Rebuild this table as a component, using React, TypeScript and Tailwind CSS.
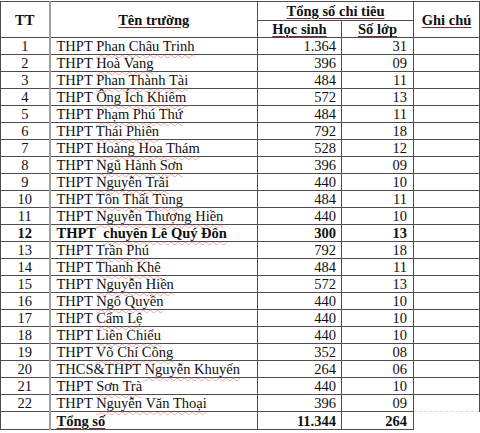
import React from "react";

type Row = { tt: string; prefix: string; name: string; hs: string; sl: string; bold?: boolean };

const rows: Row[] = [
  { tt: "1", prefix: "THPT ", name: "Phan Châu Trinh", hs: "1.364", sl: "31" },
  { tt: "2", prefix: "THPT ", name: "Hoà Vang", hs: "396", sl: "09" },
  { tt: "3", prefix: "THPT ", name: "Phan Thành Tài", hs: "484", sl: "11" },
  { tt: "4", prefix: "THPT ", name: "Ông Ích Khiêm", hs: "572", sl: "13" },
  { tt: "5", prefix: "THPT ", name: "Phạm Phú Thứ", hs: "484", sl: "11" },
  { tt: "6", prefix: "THPT ", name: "Thái Phiên", hs: "792", sl: "18" },
  { tt: "7", prefix: "THPT ", name: "Hoàng Hoa Thám", hs: "528", sl: "12" },
  { tt: "8", prefix: "THPT ", name: "Ngũ Hành Sơn", hs: "396", sl: "09" },
  { tt: "9", prefix: "THPT ", name: "Nguyễn Trãi", hs: "440", sl: "10" },
  { tt: "10", prefix: "THPT ", name: "Tôn Thất Tùng", hs: "484", sl: "11" },
  { tt: "11", prefix: "THPT ", name: "Nguyễn Thượng Hiền", hs: "440", sl: "10" },
  { tt: "12", prefix: "THPT\u00a0 ", name: "chuyên Lê Quý Đôn", hs: "300", sl: "13", bold: true },
  { tt: "13", prefix: "THPT ", name: "Trần Phú", hs: "792", sl: "18" },
  { tt: "14", prefix: "THPT ", name: "Thanh Khê", hs: "484", sl: "11" },
  { tt: "15", prefix: "THPT ", name: "Nguyễn Hiền", hs: "572", sl: "13" },
  { tt: "16", prefix: "THPT ", name: "Ngô Quyền", hs: "440", sl: "10" },
  { tt: "17", prefix: "THPT ", name: "Cẩm Lệ", hs: "440", sl: "10" },
  { tt: "18", prefix: "THPT ", name: "Liên Chiểu", hs: "440", sl: "10" },
  { tt: "19", prefix: "THPT ", name: "Võ Chí Công", hs: "352", sl: "08" },
  { tt: "20", prefix: "THCS&THPT ", name: "Nguyễn Khuyến", hs: "264", sl: "06" },
  { tt: "21", prefix: "THPT ", name: "Sơn Trà", hs: "440", sl: "10" },
  { tt: "22", prefix: "THPT ", name: "Nguyễn Văn Thoại", hs: "396", sl: "09" },
];

const cell = "border border-[#4d4d4d] p-0";
const wavy = "underline decoration-wavy decoration-[#f2a0a0] decoration-1 underline-offset-[3px]";
const hdr = "underline decoration-[#7a3030] decoration-1 underline-offset-[2px]";

export default function App() {
  return (
    <div className="w-[480px] h-[433px] bg-white pt-px overflow-hidden">
      <table
        className="table-fixed border-collapse w-[479px] text-[14.5px] leading-[16px] text-[#111]"
        style={{ fontFamily: '"Liberation Serif", "Times New Roman", serif' }}
      >
        <colgroup>
          <col className="w-[49px]" />
          <col className="w-[208px]" />
          <col className="w-[84px]" />
          <col className="w-[72px]" />
          <col className="w-[66px]" />
        </colgroup>
        <thead>
          <tr className="h-[19px]">
            <th rowSpan={2} className={`${cell} border-r-2 border-r-[#a0a0a0] text-center font-bold`}>
              TT
            </th>
            <th rowSpan={2} className={`${cell} text-center font-bold`}>
              <span className={hdr}>Tên trường</span>
            </th>
            <th colSpan={2} className={`${cell} text-center font-bold`}>
              <span className={hdr}>Tổng số chỉ tiêu</span>
            </th>
            <th rowSpan={2} className={`${cell} text-center font-bold`}>
              <span className={hdr}>Ghi chú</span>
            </th>
          </tr>
          <tr className="h-[17px]">
            <th className={`${cell} text-center font-bold`}>
              <span className={hdr}>Học sinh</span>
            </th>
            <th className={`${cell} text-center font-bold`}>
              <span className={hdr}>Số lớp</span>
            </th>
          </tr>
        </thead>
        <tbody>
          {rows.map((r, i) => (
            <tr key={r.tt} className={`h-[17px] ${r.bold ? "font-bold" : ""}`}>
              <td className={`${cell} border-r-2 border-r-[#a0a0a0] text-center`}>{r.tt}</td>
              <td className={`${cell} pl-[6px] text-left whitespace-nowrap`}>
                {r.prefix}
                <span className={wavy}>{r.name}</span>
              </td>
              <td className={`${cell} text-right pr-[5px]`}>{r.hs}</td>
              <td className={`${cell} text-right pr-[6px]`}>{r.sl}</td>
              <td
                className={`${cell} ${
                  i === rows.length - 1 ? "border-b-[#d8d8d8] [border-bottom-style:dashed]" : ""
                }`}
              ></td>
            </tr>
          ))}
          <tr className="h-[18px] font-bold">
            <td className={`${cell} border-r-2 border-r-[#a0a0a0]`}></td>
            <td className={`${cell} pl-[6px] text-left`}>
              <span className={hdr}>Tổng số</span>
            </td>
            <td className={`${cell} text-right pr-[5px]`}>11.344</td>
            <td className={`${cell} text-right pr-[6px]`}>264</td>
            <td className="p-0 border-l border-l-[#4d4d4d]"></td>
          </tr>
        </tbody>
      </table>
    </div>
  );
}
